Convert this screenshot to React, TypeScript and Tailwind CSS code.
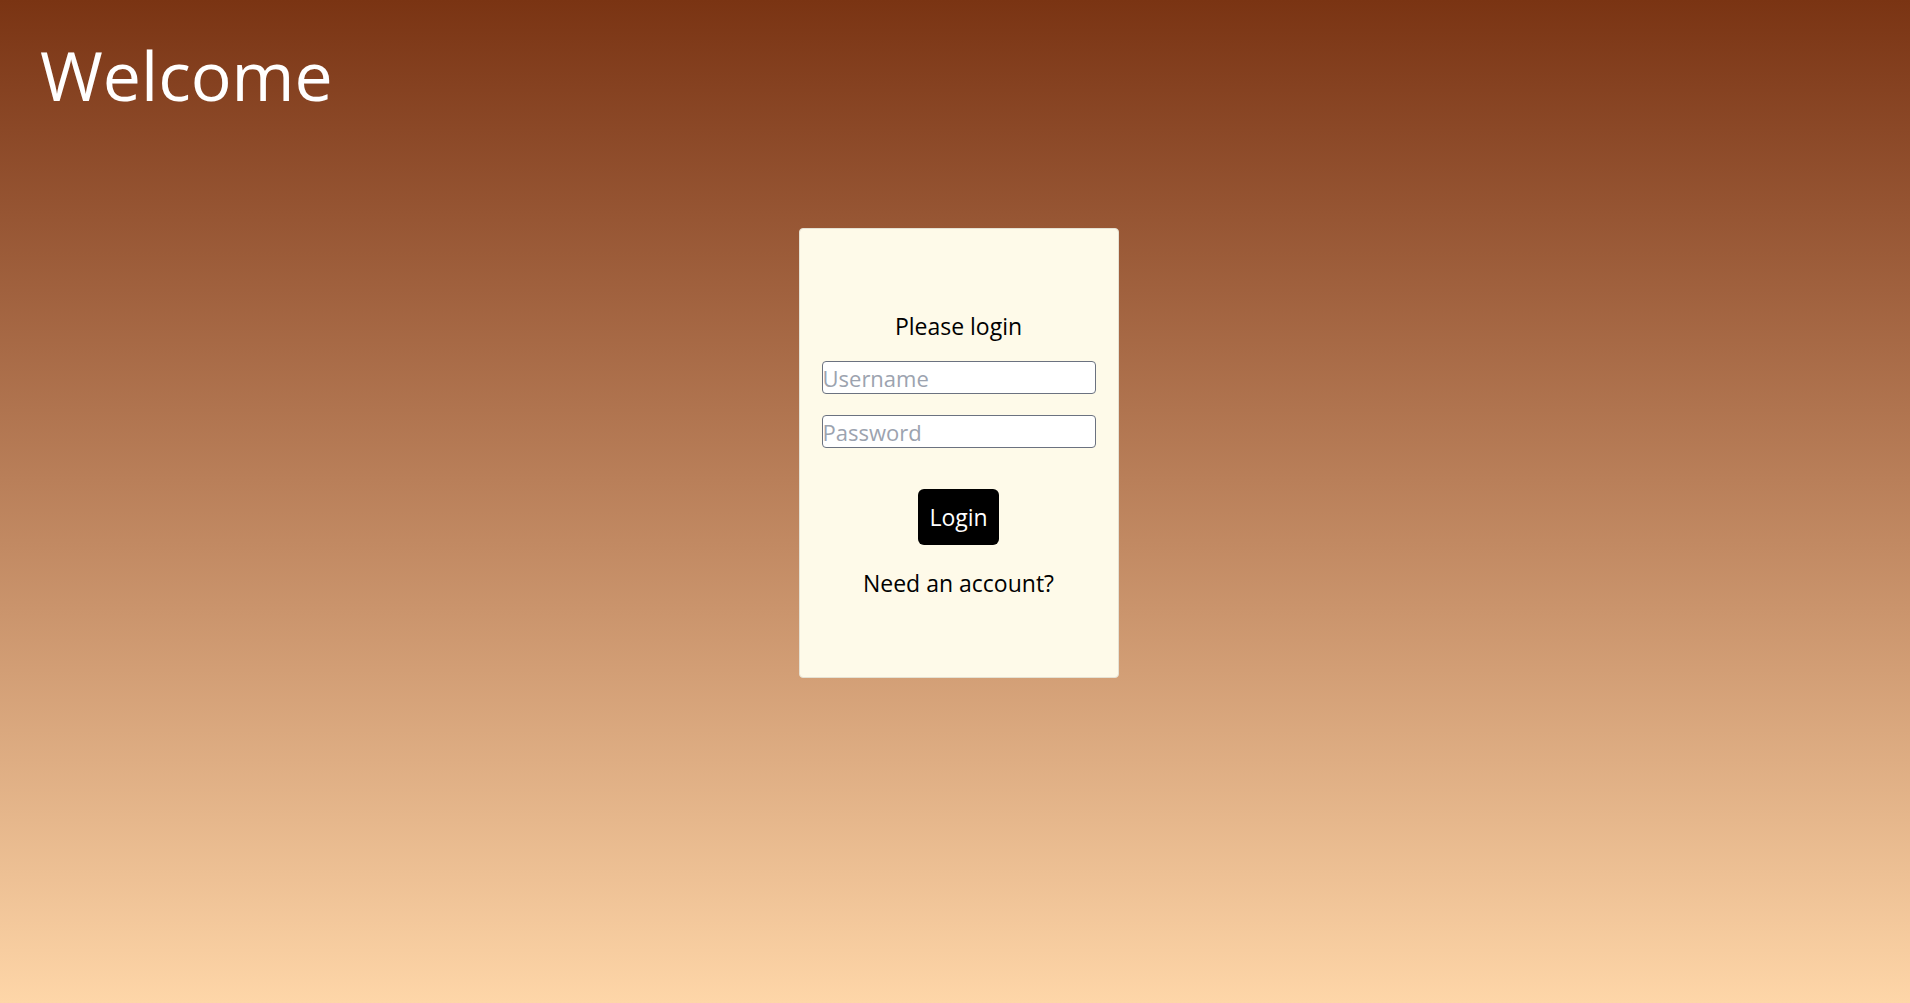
import React from 'react';

const font = { fontFamily: '"Open Sans", "Noto Sans", sans-serif' };

export default function App() {
  return (
    <div
      className="min-h-screen w-full bg-gradient-to-b from-[#7a3413] to-[#fed6a8] text-black"
      style={font}
    >
      <header className="px-10 pt-[27px]">
        <h1 className="text-[68px] leading-[96px] text-white">Welcome</h1>
      </header>

      <main className="flex justify-center pt-[105px]">
        <div className="w-[320px] h-[450px] ml-[7px] bg-[#fefae9] border border-[#e5e1d3] rounded-[4px] px-[22px] pt-[83px] flex flex-col items-center">
          <p className="text-[23px] leading-[28px]">Please login</p>
          <input
            type="text"
            placeholder="Username"
            className="mt-[21px] w-full h-[33px] pt-[2px] bg-white border border-[#6b7280] rounded-[4px] text-[22px] placeholder:text-[#9ca3af] outline-none"
          />
          <input
            type="password"
            placeholder="Password"
            className="mt-[21px] w-full h-[33px] pt-[2px] bg-white border border-[#6b7280] rounded-[4px] text-[22px] placeholder:text-[#9ca3af] outline-none"
          />
          <button className="mt-[41px] w-[81px] h-[56px] bg-black text-white rounded-[6px] text-[23px]">
            Login
          </button>
          <p className="mt-[24px] text-[23px] leading-[28px]">Need an account?</p>
        </div>
      </main>
    </div>
  );
}
